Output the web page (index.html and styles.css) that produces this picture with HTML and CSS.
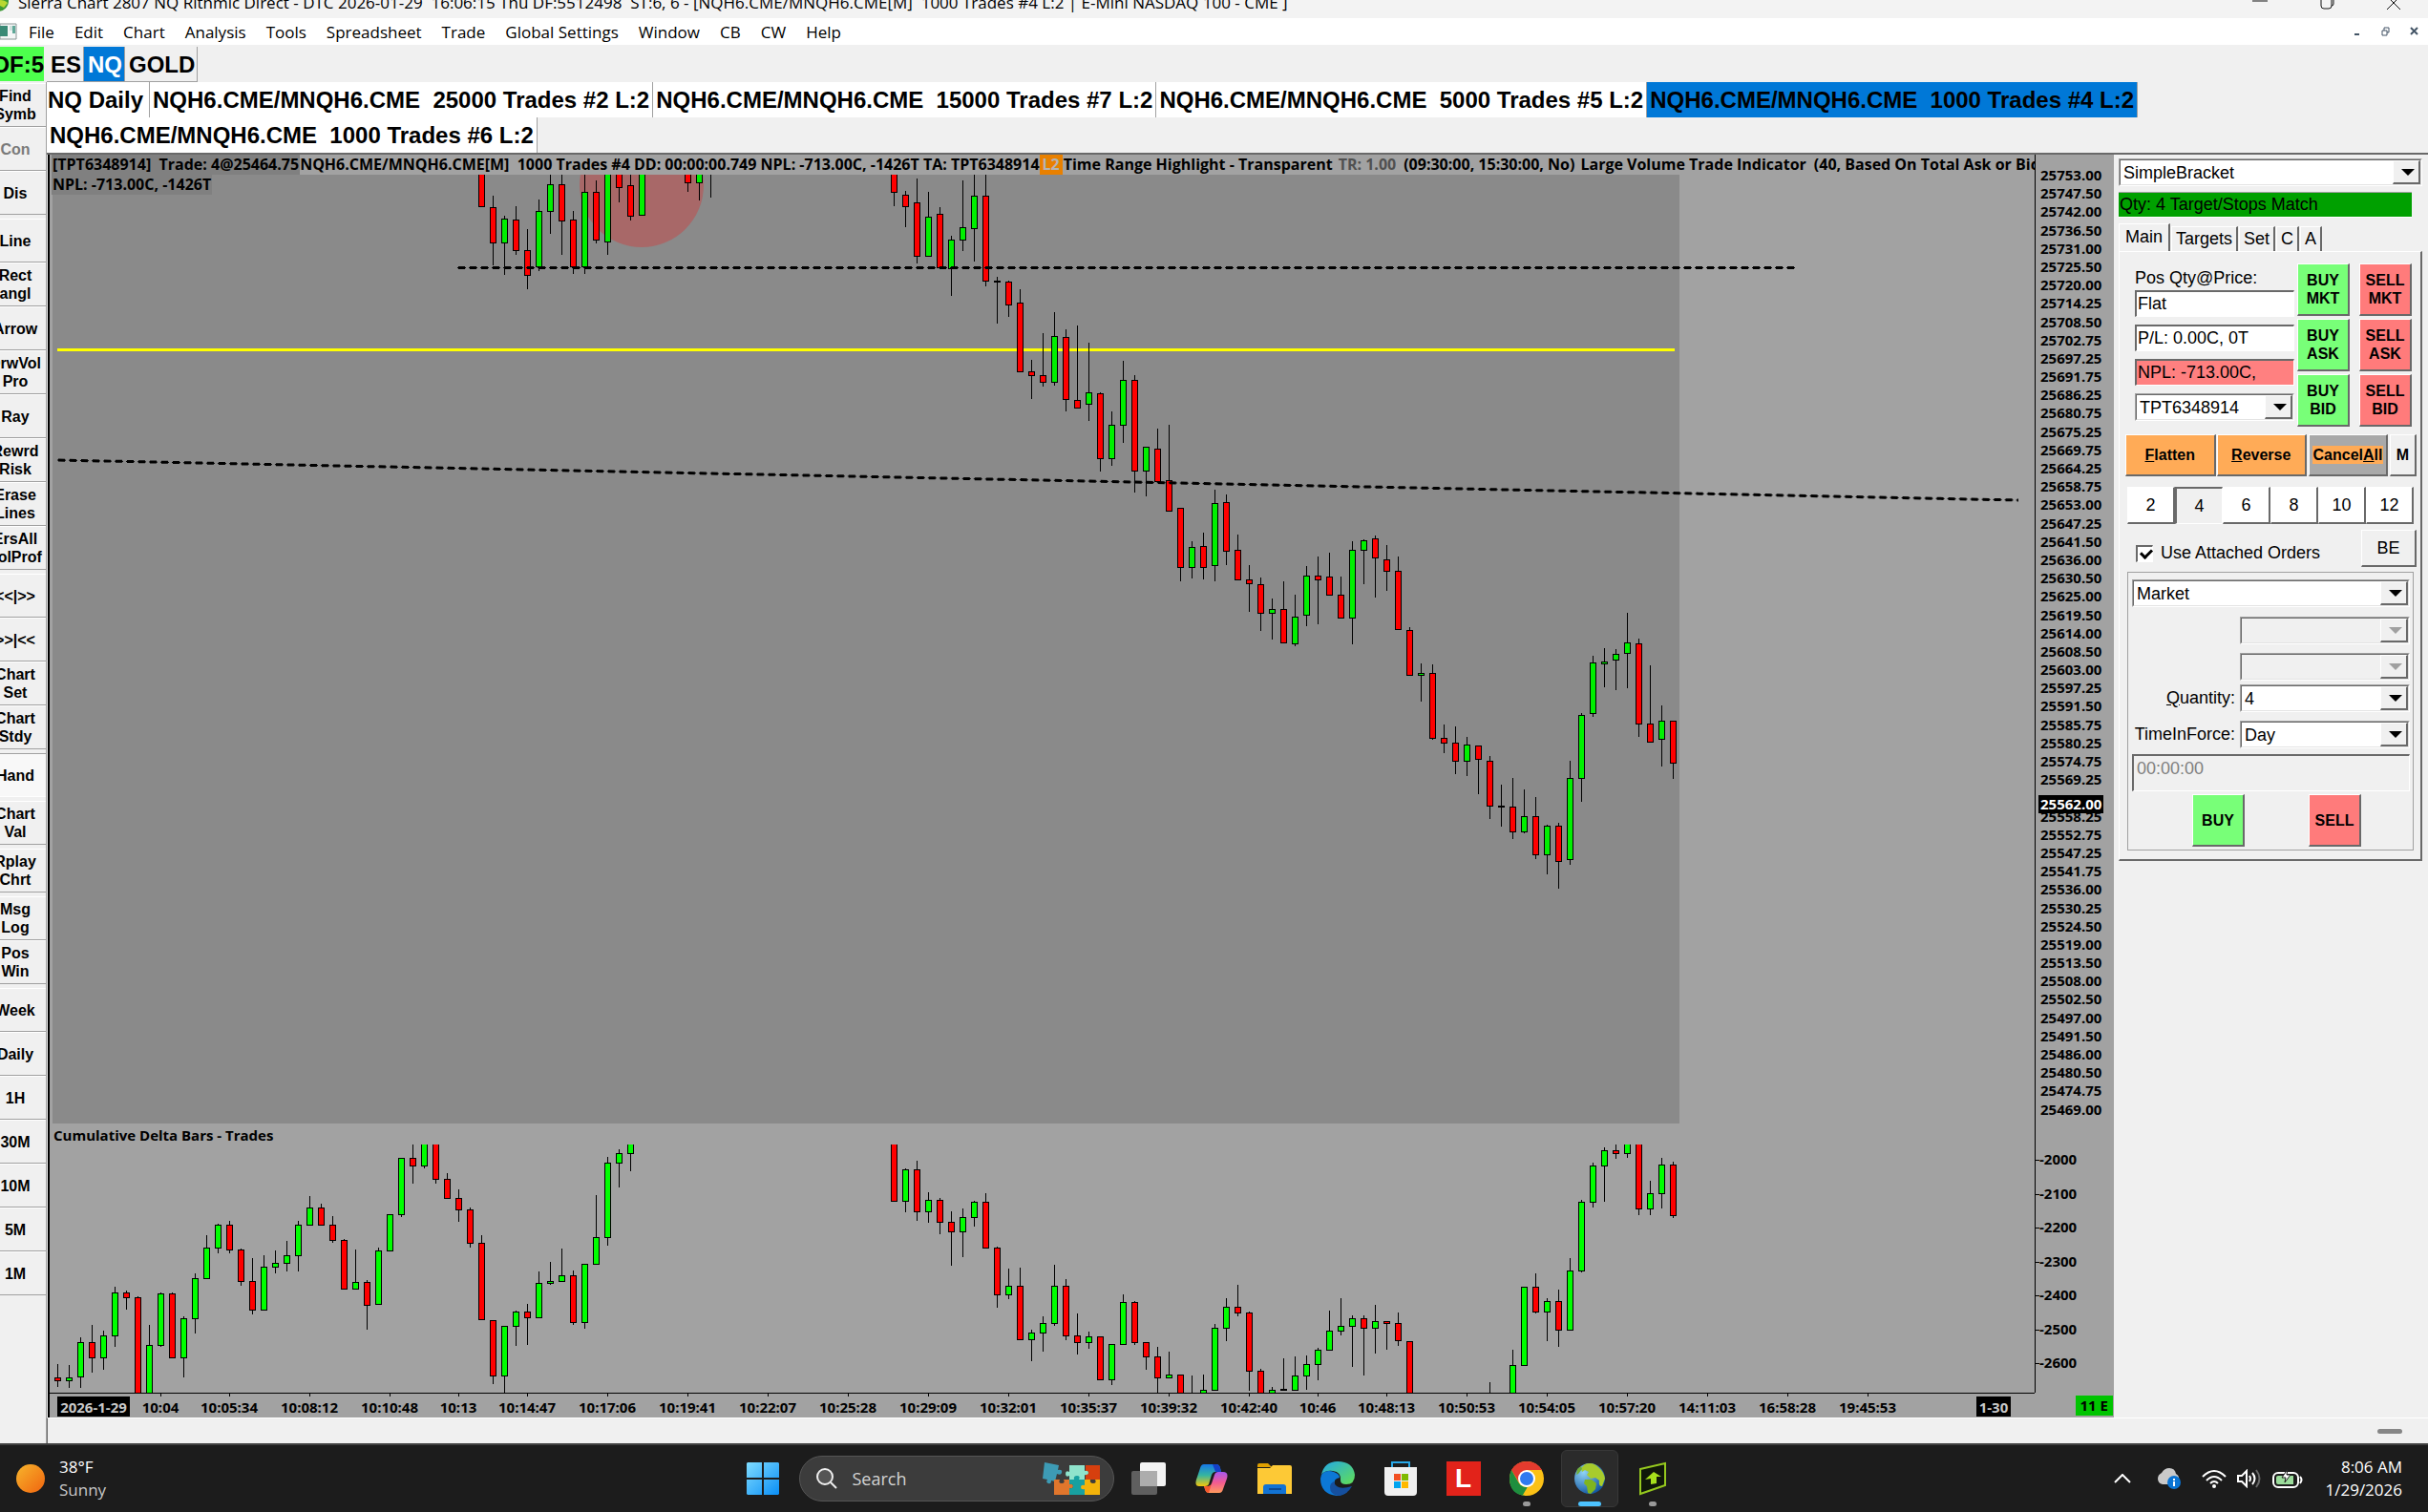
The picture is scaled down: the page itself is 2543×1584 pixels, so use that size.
FILE: index.html
```html
<!DOCTYPE html>
<html lang="en">
<head>
  <meta charset="UTF-8">
  <meta name="viewport" content="width=device-width, initial-scale=1.0">
  <title>Sierra Chart</title>
  <link rel="stylesheet" href="styles.css">
</head>
<body>
  <header class="titlebar">
    <svg class="app-icon" width="10" height="19" viewBox="0 0 10 19">
      <circle cx="-2" cy="1" r="11" fill="#3d9a35"/>
      <path d="M0 0q5 0 8 3l-4 5-4-2z" fill="#b8d832"/>
    </svg>
    <span class="title-text">Sierra Chart 2807 NQ Rithmic Direct - DTC 2026-01-29  16:06:15 Thu DF:5512498  ST:6, 6 - [NQH6.CME/MNQH6.CME[M]  1000 Trades #4 L:2 | E-Mini NASDAQ 100 - CME ]</span>
    <div class="window-buttons">
      <button aria-label="Minimize"><svg width="16" height="12"><path d="M0 1h16" stroke="#111" fill="none"/></svg></button>
      <button aria-label="Restore"><svg width="16" height="12"><path d="M2 0v6q0 3 3 3h5q3 0 3-3V0M13 6q2 0 2-2V0" stroke="#111" fill="none"/></svg></button>
      <button aria-label="Close"><svg width="16" height="12"><path d="M1 10L8 3l7 7M8 3L5 0M8 3l3-3" stroke="#111" fill="none"/></svg></button>
    </div>
  </header>

  <nav class="menubar">
    <svg class="doc-icon" width="18" height="18" viewBox="0 0 18 18">
      <path d="M0 1h17v16H0z" fill="#f4f6f6" stroke="#8b9696"/>
      <path d="M0 3h8v11H0z" fill="#3a8a76"/>
      <path d="M10 3h5v5h-5z" fill="#cfe0dc"/>
      <path d="M13 3h3v8h-3z" fill="#5fa898"/>
    </svg>
    <div class="menu-items">
      <button>File</button><button>Edit</button><button>Chart</button><button>Analysis</button><button>Tools</button><button>Spreadsheet</button><button>Trade</button><button>Global Settings</button><button>Window</button><button>CB</button><button>CW</button><button>Help</button>
    </div>
    <div class="mdi-buttons">
      <button aria-label="Minimize chart"><svg width="10" height="10"><path d="M2 8h5" stroke="#456" stroke-width="2"/></svg></button>
      <button aria-label="Restore chart"><svg width="10" height="10"><path d="M1 4h5v5H1zM3 4V1h5v5H6" stroke="#456" fill="none"/></svg></button>
      <button aria-label="Close chart"><svg width="10" height="10"><path d="M1 1l7 7M8 1L1 8" stroke="#456" stroke-width="2"/></svg></button>
    </div>
  </nav>

  <div class="workbooks">
    <span class="data-feed">DF:5</span>
    <button>ES</button>
    <button class="active">NQ</button>
    <button>GOLD</button>
  </div>

  <div class="workspace">
    <aside class="tools">
      <div class="tool-group">
        <button>Find<br>Symb</button>
        <button disabled>Con</button>
        <button>Dis</button>
      </div>
      <div class="tool-group">
        <button>Line</button>
        <button>Rect<br>angl</button>
        <button>Arrow</button>
        <button>DrwVol<br>Pro</button>
        <button>Ray</button>
        <button>Rewrd<br>Risk</button>
        <button>Erase<br>Lines</button>
        <button>ErsAll<br>VolProf</button>
      </div>
      <div class="tool-group">
        <button>&lt;&lt;|&gt;&gt;</button>
        <button>&gt;&gt;|&lt;&lt;</button>
        <button>Chart<br>Set</button>
        <button>Chart<br>Stdy</button>
      </div>
      <div class="tool-group">
        <button class="pressed">Hand</button>
      </div>
      <div class="tool-group">
        <button>Chart<br>Val</button>
      </div>
      <div class="tool-group">
        <button>Rplay<br>Chrt</button>
      </div>
      <div class="tool-group">
        <button>Msg<br>Log</button>
        <button>Pos<br>Win</button>
      </div>
      <div class="tool-group">
        <button>Week</button>
        <button>Daily</button>
        <button>1H</button>
        <button>30M</button>
        <button>10M</button>
        <button>5M</button>
        <button>1M</button>
      </div>
    </aside>

    <main class="main">
      <div class="chart-tabs">
        <button class="first">NQ Daily</button>
        <button>NQH6.CME/MNQH6.CME  25000 Trades #2 L:2</button>
        <button>NQH6.CME/MNQH6.CME  15000 Trades #7 L:2</button>
        <button>NQH6.CME/MNQH6.CME  5000 Trades #5 L:2</button>
        <button class="active">NQH6.CME/MNQH6.CME  1000 Trades #4 L:2</button>
        <button>NQH6.CME/MNQH6.CME  1000 Trades #6 L:2</button>
      </div>

      <div class="content">
        <section class="chart">
          <div class="plots">
            <div class="chart-header">
              <span class="trade-label">[TPT6348914]  Trade: 4@25464.75</span>
              <span>NQH6.CME/MNQH6.CME[M]  1000 Trades #4 DD: 00:00:00.749 NPL: -713.00C, -1426T TA: TPT6348914</span>
              <span class="level2">L2</span>
              <span>Time Range Highlight - Transparent</span>
              <span class="dim">TR: 1.00</span>
              <span class="params">(09:30:00, 15:30:00, No)</span>
              <span class="study">Large Volume Trade Indicator</span>
              <span class="params">(40, Based On Total Ask or Bid Volume)</span>
            </div>
            <div class="price-plot">
              <span class="npl-label">NPL: -713.00C, -1426T</span>
              <svg id="pricePlot"></svg>
            </div>
            <div class="study-title">Cumulative Delta Bars - Trades</div>
            <svg id="deltaPlot" class="delta-plot"></svg>
            <svg id="timeAxis" class="time-axis"></svg>
          </div>
          <div class="axis">
            <div class="scales">
              <div class="price-scale" id="priceScale">
                <span class="last-price">25562.00</span>
              </div>
              <div class="delta-scale" id="deltaScale"></div>
            </div>
            <div class="axis-foot"><span>11 E</span></div>
          </div>
        </section>

        <section class="trade">
          <div class="combo">
            <select aria-label="Trade configuration"><option>SimpleBracket</option></select>
          </div>
          <div class="status-match">Qty: 4 Target/Stops Match</div>
          <div class="trade-tabs">
            <button class="active">Main</button><button>Targets</button><button>Set</button><button>C</button><button>A</button>
          </div>
          <div class="trade-body">
            <div class="position">
              <div class="position-fields">
                <label for="pos">Pos Qty@Price:</label>
                <input id="pos" type="text" value="Flat" readonly>
                <input type="text" value="P/L: 0.00C, 0T" aria-label="Profit and loss" readonly>
                <input class="loss" type="text" value="NPL: -713.00C," aria-label="Net profit and loss" readonly>
                <div class="combo">
                  <select aria-label="Trade account"><option>TPT6348914</option></select>
                </div>
              </div>
              <div class="quick">
                <button class="buy">BUY<br>MKT</button><button class="sell">SELL<br>MKT</button>
                <button class="buy">BUY<br>ASK</button><button class="sell">SELL<br>ASK</button>
                <button class="buy">BUY<br>BID</button><button class="sell">SELL<br>BID</button>
              </div>
            </div>

            <div class="actions">
              <button class="orange"><u>F</u>latten</button>
              <button class="orange"><u>R</u>everse</button>
              <button class="cancel"><span>Cancel<u>A</u>ll</span></button>
              <button class="mini">M</button>
            </div>

            <div class="quantities">
              <button>2</button><button class="pressed">4</button><button>6</button><button>8</button><button>10</button><button>12</button>
            </div>

            <div class="attached">
              <input type="checkbox" id="attached" checked>
              <label for="attached">Use Attached Orders</label>
              <button>BE</button>
            </div>

            <div class="order">
              <div class="combo">
                <select aria-label="Order type"><option>Market</option></select>
              </div>
              <div class="order-grid">
                <span></span>
                <div class="combo off"><select aria-label="Price 1" disabled><option></option></select></div>
                <span></span>
                <div class="combo off tight"><select aria-label="Price 2" disabled><option></option></select></div>
                <label for="qty"><u>Q</u>uantity:</label>
                <div class="combo"><select id="qty"><option>4</option></select></div>
                <label for="tif">TimeInForce:</label>
                <div class="combo"><select id="tif"><option>Day</option></select></div>
              </div>
              <input class="gtd" type="text" value="00:00:00" aria-label="Expiry time" disabled>
              <div class="submit">
                <button class="buy">BUY</button>
                <button class="sell">SELL</button>
              </div>
            </div>
          </div>
        </section>
      </div>

      <div class="statusbar"><span class="grip"></span></div>
    </main>
  </div>

  <footer class="taskbar">
    <div class="weather">
      <svg width="30" height="30" viewBox="0 0 30 30">
        <defs><linearGradient id="sun" x1="0" y1="0" x2="1" y2="1"><stop offset="0" stop-color="#f7b52c"/><stop offset="1" stop-color="#f0640f"/></linearGradient></defs>
        <circle cx="15" cy="15" r="15" fill="url(#sun)"/>
      </svg>
      <div><div>38°F</div><div class="soft">Sunny</div></div>
    </div>

    <div class="apps">
      <button aria-label="Start">
        <svg width="36" height="36" viewBox="0 0 36 36">
          <defs><linearGradient id="win" x1="0" y1="0" x2="1" y2="1"><stop offset="0" stop-color="#7fdcff"/><stop offset="1" stop-color="#0a8ef5"/></linearGradient></defs>
          <path d="M2 1h15v16H1V2zM19 1h15l1 1v15H19zM1 19h16v16H2l-1-1zM19 19h16v15l-1 1H19z" fill="url(#win)"/>
        </svg>
      </button>
      <div class="search">
        <svg width="22" height="22" viewBox="0 0 22 22"><circle cx="9" cy="9" r="8" stroke="#eee" stroke-width="2" fill="#555"/><path d="M15 15l6 6" stroke="#eee" stroke-width="2"/></svg>
        <input type="text" placeholder="Search" aria-label="Search">
        <svg width="62" height="36" viewBox="0 0 62 36">
          <path d="M2 1l15 3-1 5q5-1 4 3-1 3-5 1l-2 8-4-1q0 4-3 3-3-1-1-4l-5-1z" fill="#3d9bb5"/>
          <path d="M28 4h16v6q4-2 4 2t-4 2v5H28v-4q-4 2-4-2t4-2z" fill="#8fe3cc"/>
          <path d="M45 4h15v15H45v-5q4 0 3-3-1-2-3-1z" fill="#d63f0e"/>
          <path d="M12 19h6q-2 4 2 4t2-4h6v5q4-1 4 2t-4 2v7H12z" fill="#e0762c"/>
          <path d="M28 19h5q-1-4 3-4t2 4h6v16H28v-7q4 1 4-2t-4-2z" fill="#18a0a0"/>
          <path d="M44 19h6q-1 4 3 4t2-4h5v16H44v-6q-4 1-4-2t4-2z" fill="#f3b30a"/>
        </svg>
      </div>
      <button aria-label="Task view">
        <svg width="36" height="36" viewBox="0 0 36 36"><rect x="0" y="10" width="27" height="25" rx="2" fill="#5f5f5f"/><rect x="9" y="1" width="27" height="25" rx="2" fill="#f3f3f3"/><path d="M9 10h18v16H9z" fill="#adadad"/></svg>
      </button>
      <button aria-label="Copilot">
        <svg width="36" height="36" viewBox="0 0 36 36">
          <defs>
            <linearGradient id="cpA" x1="0" y1="0" x2="0" y2="1"><stop offset="0" stop-color="#1678e8"/><stop offset=".5" stop-color="#35b5a0"/><stop offset="1" stop-color="#f5c60a"/></linearGradient>
            <linearGradient id="cpB" x1="0" y1="0" x2="0" y2="1"><stop offset="0" stop-color="#a558ef"/><stop offset=".5" stop-color="#f25a92"/><stop offset="1" stop-color="#ff9a5c"/></linearGradient>
          </defs>
          <path d="M10 3h13q3 0 4 4l1 4h-6q-3 0-4 3l-3 10q-1 2-4 2H5q-5 0-3-7L6 7q1-4 4-4z" fill="url(#cpA)"/>
          <path d="M26 33H15q-3 0-4-4l-1-3h4q3 0 4-3l3-9q1-3 4-3h5q6 0 4 7l-4 11q-1 4-4 4z" fill="url(#cpB)"/>
          <path d="M19 3h4q3 0 4 4l1 4h-6z" fill="#1440c8"/>
          <path d="M15 33q-3 0-4-4l-1-3h4q3 0 4-3z" fill="#f5582c"/>
        </svg>
      </button>
      <button aria-label="File Explorer">
        <svg width="36" height="36" viewBox="0 0 36 36"><path d="M0 4q0-2 2-2h9l4 4H0z" fill="#e0a000"/><path d="M0 7h13l3-3h18q2 0 2 2v28H0z" fill="#fdc936"/><path d="M6 34V27q0-3 3-3h18q3 0 3 3v7z" fill="#1273d4"/><path d="M12 29h13" stroke="#0b4a94" stroke-width="2"/></svg>
      </button>
      <button aria-label="Edge">
        <svg width="36" height="36" viewBox="0 0 36 36">
          <defs><linearGradient id="edge" x1="0" y1="0" x2="1" y2="1"><stop offset="0" stop-color="#23a7e8"/><stop offset="1" stop-color="#62e053"/></linearGradient></defs>
          <path d="M1 14Q4 0 18 0q16 0 18 14 0 10-9 10-6 0-6-4 1-9-8-10Q5 9 1 14z" fill="url(#edge)"/>
          <path d="M1 14q5-6 13-3 6 2 6 6-7 1-5 8 3 9 13 7-5 4-11 4Q0 34 0 18z" fill="#0c78d6"/>
          <path d="M14 21q2 10 19 5-5 9-14 10-9-1-9-9 0-4 4-6z" fill="#154f9e"/>
        </svg>
      </button>
      <button aria-label="Microsoft Store">
        <svg width="36" height="36" viewBox="0 0 36 36"><path d="M9 8V1h18v7" fill="none" stroke="#28a8e8" stroke-width="2"/><path d="M1 6h34v26q0 4-4 4H5q-4 0-4-4z" fill="#f0f0f0"/><path d="M11 13h7v7h-7z" fill="#f25022"/><path d="M19 13h7v7h-7z" fill="#7fba00"/><path d="M11 21h7v7h-7z" fill="#00a4ef"/><path d="M19 21h7v7h-7z" fill="#ffb900"/></svg>
      </button>
      <button aria-label="L"><span class="l-tile">L</span></button>
      <button aria-label="Chrome" class="running">
        <svg width="36" height="36" viewBox="0 0 36 36"><circle cx="18" cy="18" r="18" fill="#fbc116"/><path d="M2 9Q7 0 18 0t16 9H18l-8 13z" fill="#e33b2e"/><path d="M2 9l8 14q3 4 8 4l1 0-3 9Q0 34 0 18 0 13 2 9z" fill="#1e8e3e"/><path d="M26 22l-8 14q-2 0-4-1l6-10z" fill="#fbc116"/><circle cx="18" cy="18" r="9" fill="#fff"/><circle cx="18" cy="18" r="7" fill="#2f7af0"/></svg>
      </button>
      <button aria-label="Sierra Chart" class="running current">
        <svg width="34" height="34" viewBox="0 0 34 34">
          <defs><radialGradient id="sea" cx=".3" cy=".3" r=".8"><stop offset="0" stop-color="#8fd3f5"/><stop offset="1" stop-color="#0c4f9c"/></radialGradient></defs>
          <circle cx="17" cy="17" r="16" fill="url(#sea)"/>
          <path d="M12 2q8-3 14 3 6 5 7 12l-3 8q-4 0-3-6l-4-3-5 1-4-4 2-3-4-2-3 2-1-4z" fill="#a8cc2c"/>
          <path d="M12 18l7 0 5 4-1 6-5 5-3-1-1-7-3-3z" fill="#7fb51f"/>
          <path d="M4 7l4-3 1 3-4 5-2 1z" fill="#6fae3a"/>
        </svg>
      </button>
      <button aria-label="Remote" class="running">
        <svg width="34" height="36" viewBox="0 0 34 36"><path d="M4 8l26-6v23L4 34z" fill="#10180a" stroke="#95c81e" stroke-width="2"/><path d="M9 19l9-8 8 5-5 0 0 7-6 1 0-6z" fill="#a6e01c"/></svg>
      </button>
    </div>

    <div class="tray">
      <svg width="18" height="10" viewBox="0 0 18 10"><path d="M1 9l8-8 8 8" fill="none" stroke="#fff" stroke-width="2"/></svg>
      <svg width="26" height="24" viewBox="0 0 26 24"><path d="M6 18q-5-1-5-6 0-4 4-6 3-5 8-5 6 0 7 6 4 2 3 7l-5 4z" fill="#c9c9c9"/><circle cx="18" cy="16" r="7" fill="#0a74d4"/><path d="M18 12v2M18 15v5" stroke="#fff" stroke-width="2"/></svg>
      <svg width="26" height="20" viewBox="0 0 26 20"><path d="M1 8q12-12 24 0M5 12q8-8 16 0M9 15q4-4 8 0" fill="none" stroke="#fff" stroke-width="2"/><circle cx="13" cy="18" r="2" fill="#fff"/></svg>
      <svg width="26" height="20" viewBox="0 0 26 20"><path d="M1 7h4l5-5v16l-5-5H1z" fill="none" stroke="#fff" stroke-width="2"/><path d="M13 7q2 3 0 6M16 4q5 6 0 12" fill="none" stroke="#fff" stroke-width="2"/><path d="M20 1q7 9 0 18" fill="none" stroke="#666" stroke-width="2"/></svg>
      <svg width="32" height="22" viewBox="0 0 32 22"><rect x="1" y="5" width="26" height="15" rx="5" fill="none" stroke="#fff" stroke-width="2"/><path d="M4 10q0-2 2-2h16v9H6q-2 0-2-2z" fill="#9bdc9b"/><path d="M29 9q3 3 0 7" fill="none" stroke="#fff" stroke-width="2"/><path d="M16 1l-6 9h4l-1 5 6-8h-4z" fill="#fff" stroke="#1c1c1c"/></svg>
      <div class="clock"><div>8:06 AM</div><div>1/29/2026</div></div>
    </div>
  </footer>

  <script src="app.js"></script>
</body>
</html>
```
FILE: styles.css
```css
* {
  box-sizing: border-box;
}
body {
  margin: 0;
  height: 100vh;
  display: flex;
  flex-direction: column;
  overflow: hidden;
  background: #f0f0f0;
  color: #000;
  font-family: "Liberation Sans", Arial, sans-serif;
  font-size: 18px;
}
button, input, select {
  font: inherit;
  color: inherit;
  margin: 0;
  border-radius: 0;
}
button {
  border: 0;
  padding: 0;
  background: none;
  white-space: pre;
}
svg {
  display: block;
  flex: none;
}

/* title and menu */
.titlebar {
  display: flex;
  height: 19px;
  flex: none;
  overflow: hidden;
  background: #f3f3f3;
  font: 17px/20px "Open Sans", "Noto Sans", sans-serif;
}
.app-icon {
  margin-right: 9px;
}
.title-text {
  flex: 1;
  white-space: pre;
  margin-top: -7px;
}
.window-buttons {
  display: flex;
  gap: 54px;
  padding-right: 28px;
  align-items: flex-start;
}
.menubar {
  display: flex;
  align-items: center;
  height: 28px;
  flex: none;
  background: #fff;
  font: 17px/28px "Open Sans", "Noto Sans", sans-serif;
}
.menu-items {
  display: flex;
  flex: 1;
  gap: 21px;
  margin-left: 12px;
  padding-top: 2px;
}
.mdi-buttons {
  display: flex;
  gap: 20px;
  padding-right: 9px;
}

/* workbook row */
.workbooks {
  display: flex;
  align-items: flex-start;
  height: 39px;
  flex: none;
  padding-top: 2px;
  font-size: 24px;
  font-weight: bold;
}
.data-feed {
  width: 46px;
  height: 36px;
  margin-right: 3px;
  line-height: 38px;
  background: #4dff4d;
  overflow: hidden;
  direction: rtl;
}
.workbooks button {
  height: 37px;
  padding: 2px 2px 0 4px;
  border-right: 1px solid #a0a0a0;
  border-bottom: 1px solid #a0a0a0;
}
.workbooks .active {
  background: #0078d7;
  color: #fff;
}

/* left tool buttons */
.workspace {
  display: flex;
  flex: 1;
  min-height: 0;
}
.tools {
  width: 49px;
  flex: none;
  padding-top: 1px;
  display: flex;
  flex-direction: column;
  gap: 4px;
  overflow: hidden;
  border-right: 1px solid #a0a0a0;
}
.tool-group {
  display: flex;
  flex-direction: column;
  width: 64px;
  margin-left: -16px;
}
.tools button {
  height: 46px;
  font-size: 16px;
  font-weight: bold;
  line-height: 19px;
  display: flex;
  align-items: center;
  justify-content: center;
  text-align: center;
  border-top: 1px solid #fff;
  border-bottom: 1px solid #a0a0a0;
}
.tools button:disabled {
  color: #7a7a7a;
}
.tools .pressed {
  background: #f8f8f8;
  border-top-color: #a0a0a0;
  border-bottom-color: #fff;
}

.main {
  flex: 1;
  min-width: 0;
  display: flex;
  flex-direction: column;
}
.chart-tabs {
  display: flex;
  flex-wrap: wrap;
  font-size: 24px;
  font-weight: bold;
}
.chart-tabs button {
  height: 37px;
  padding: 0 3px;
  background: #fff;
  border-right: 1px solid #a0a0a0;
}
.chart-tabs .first {
  padding: 0 6px 0 1px;
}
.chart-tabs .active {
  background: #0078d7;
}
.content {
  display: flex;
  flex: 1;
  min-height: 0;
  border-top: 2px solid #696969;
}

/* chart */
.chart {
  flex: 1;
  min-width: 0;
  display: flex;
  margin-left: 1px;
  background: #a2a2a2;
  border-left: 2px solid #000;
  font: bold 15px/19px "Open Sans", "Noto Sans", sans-serif;
}
.plots {
  flex: 1;
  min-width: 0;
  display: flex;
  flex-direction: column;
}
.chart-header {
  display: flex;
  height: 21px;
  margin-left: 2px;
  font-size: 16px;
  line-height: 21px;
  white-space: pre;
  overflow: hidden;
}
.chart-header span {
  flex: none;
}
.chart-header .trade-label {
  background: #808080;
  padding: 0 1px;
}
.chart-header .level2 {
  background: #e88000;
  color: #b4b4b4;
  padding: 0 3px;
  margin-right: 1px;
}
.chart-header .dim {
  color: #505050;
  margin: 0 8px 0 6px;
}
.chart-header .study {
  margin: 0 8px 0 6px;
}
.price-plot {
  flex: 1;
  min-height: 0;
  position: relative;
}
.price-plot svg {
  width: 100%;
  height: 100%;
}
.npl-label {
  position: absolute;
  left: 2px;
  top: 0;
  background: #808080;
  font-size: 16px;
  line-height: 21px;
  padding: 0 1px;
}
.study-title {
  height: 22px;
  line-height: 24px;
  padding-left: 4px;
}
.delta-plot {
  width: 100%;
  height: 260px;
}
.time-axis {
  width: 100%;
  height: 26px;
}
.time-axis text {
  text-anchor: middle;
}

.axis {
  width: 83px;
  flex: none;
  display: flex;
  flex-direction: column;
}
.scales {
  flex: 1;
  min-height: 0;
  display: flex;
  flex-direction: column;
  border-left: 1px solid #000;
  padding-top: 12px;
  padding-bottom: 22px;
}
.price-scale {
  flex: 1;
  position: relative;
  display: flex;
  flex-direction: column;
  justify-content: space-between;
  margin-bottom: 33px;
}
.price-scale span {
  height: 19px;
  padding-left: 5px;
}
.price-scale .last-price {
  position: absolute;
  left: 3px;
  top: 66%;
  padding: 0 2px;
  background: #000;
  color: #fff;
}
.delta-scale {
  height: 232px;
  display: flex;
  flex-direction: column;
  justify-content: space-between;
}
.delta-scale span {
  padding-left: 5px;
}
.delta-scale span::before {
  content: "";
  display: inline-block;
  width: 4px;
  height: 1px;
  margin-left: -5px;
  vertical-align: middle;
  background: #000;
}
.axis-foot {
  height: 26px;
  padding: 3px 1px 2px;
  display: flex;
  justify-content: flex-end;
}
.axis-foot span {
  background: #00c400;
  line-height: 21px;
  padding: 0 5px;
}

/* trade window */
.trade {
  width: 329px;
  flex: none;
  padding: 4px 6px 0 5px;
}
.combo {
  position: relative;
  height: 29px;
  border: 1px solid #a0a0a0;
  border-right-color: #fff;
  border-bottom-color: #fff;
}
.combo select {
  width: 100%;
  height: 100%;
  appearance: none;
  border: 1px solid #696969;
  border-right-color: #e3e3e3;
  border-bottom-color: #e3e3e3;
  background: #fff;
  padding: 0 28px 0 3px;
  opacity: 1;
}
.combo::before {
  content: "";
  position: absolute;
  right: 1px;
  top: 1px;
  bottom: 1px;
  width: 26px;
  background: #f0f0f0;
  border: 1px solid #fff;
  border-right: 2px solid #696969;
  border-bottom: 2px solid #696969;
  pointer-events: none;
}
.combo::after {
  content: "";
  position: absolute;
  right: 7px;
  top: 10px;
  border: 7px solid transparent;
  border-top-color: #000;
  border-bottom: 0;
  pointer-events: none;
}
.combo.off select {
  background: #f0f0f0;
}
.combo.off::after {
  border-top-color: #a0a0a0;
}
.status-match {
  height: 27px;
  margin: 6px 11px 7px 0;
  padding-left: 1px;
  line-height: 25px;
  background: #00a000;
  border-top: 1px solid #a0a0a0;
  border-bottom: 1px solid #fff;
}
.trade-tabs {
  display: flex;
  align-items: flex-end;
  gap: 1px;
  height: 28px;
}
.trade-tabs button {
  height: 26px;
  padding: 0 4px;
  border: 1px solid #fff;
  border-right: 2px solid #696969;
  border-bottom: 0;
}
.trade-tabs .active {
  height: 29px;
  padding: 0 6px 2px;
}
.trade-body {
  padding: 12px 4px 9px 6px;
  border: 1px solid #fff;
  border-right: 2px solid #696969;
  border-bottom: 2px solid #696969;
}
.position {
  display: flex;
  gap: 3px;
  padding-left: 10px;
}
.position-fields {
  width: 167px;
  display: flex;
  flex-direction: column;
  gap: 8px;
}
.position-fields label {
  line-height: 20px;
  padding-top: 5px;
  margin-bottom: -5px;
}
input[type="text"] {
  width: 100%;
  height: 28px;
  padding: 0 1px;
  background: #fff;
  border: 2px solid #696969;
  border-right: 1px solid #fff;
  border-bottom: 1px solid #fff;
}
input.loss {
  background: #ff8080;
}
.quick {
  display: grid;
  grid-template-columns: 55px 55px;
  gap: 3px 10px;
}
.quick button, .submit button {
  height: 55px;
  font-size: 16px;
  font-weight: bold;
  line-height: 19px;
}
.trade-body button {
  background: #f0f0f0;
  border: 1px solid #fff;
  border-right: 2px solid #696969;
  border-bottom: 2px solid #696969;
}
.trade-body .buy {
  background: #78ff78;
}
.trade-body .sell {
  background: #ff7b7b;
}
.actions {
  display: flex;
  gap: 1px;
  margin-top: 8px;
  height: 44px;
  font-size: 16px;
  font-weight: bold;
}
.trade-body .orange {
  flex: 1;
  background: #ffab57;
}
.trade-body .cancel {
  background: #a9a9a9;
  width: 83px;
  margin: 0 1px;
}
.cancel span {
  background: #ffab57;
  padding: 1px;
}
.actions .mini {
  width: 28px;
}
.quantities {
  display: flex;
  margin: 11px 3px 6px 2px;
}
.quantities button {
  flex: 1;
  height: 39px;
  background: #fff;
}
.quantities .pressed {
  background: #f0f0f0;
  border: 2px solid #696969;
  border-right: 1px solid #fff;
  border-bottom: 1px solid #fff;
}
.attached {
  display: flex;
  align-items: center;
  padding-left: 11px;
}
.attached input {
  appearance: none;
  width: 18px;
  height: 18px;
  margin-top: 10px;
  background: #fff;
  border: 2px solid #696969;
  border-right: 1px solid #fff;
  border-bottom: 1px solid #fff;
}
.attached input:checked::before {
  content: "";
  display: block;
  width: 9px;
  height: 5px;
  margin: 2px 0 0 3px;
  border-left: 3px solid #000;
  border-bottom: 3px solid #000;
  transform: rotate(-45deg);
}
.attached label {
  flex: 1;
  margin: 10px 0 0 8px;
}
.attached button {
  width: 58px;
  height: 39px;
}
.order {
  margin: 5px 3px 0 2px;
  padding: 7px 3px 3px 4px;
  border: 1px solid #a0a0a0;
}
.order-grid {
  display: grid;
  grid-template-columns: 1fr 178px;
  column-gap: 5px;
  row-gap: 9px;
  margin-top: 10px;
  align-items: center;
  text-align: right;
}
.order-grid .tight {
  margin-bottom: -5px;
}
.order input.gtd {
  height: 39px;
  margin: 6px 0 3px;
  padding: 0 3px 9px;
  background: #f0f0f0;
  color: #808080;
}
.submit {
  display: flex;
  justify-content: center;
  gap: 67px;
  padding-left: 12px;
}
.submit button {
  width: 55px;
}

.statusbar {
  height: 27px;
  flex: none;
  border-top: 1px solid #fff;
  border-left: 1px solid #696969;
  display: flex;
  align-items: center;
  justify-content: flex-end;
  padding-right: 27px;
}
.grip {
  width: 26px;
  height: 5px;
  border-radius: 3px;
  background: #868686;
}

/* taskbar */
.taskbar {
  display: grid;
  grid-template-columns: 1fr auto 1fr;
  align-items: center;
  height: 72px;
  flex: none;
  background: #1c1c1c;
  border-top: 2px solid #404040;
  color: #fff;
  font: 17px/24px "Open Sans", "Noto Sans", sans-serif;
}
.weather {
  display: flex;
  align-items: center;
  gap: 15px;
  padding-left: 17px;
}
.soft {
  color: #c8c8c8;
}
.apps {
  display: flex;
  gap: 6px;
  align-items: center;
  margin-right: 14px;
}
.apps button {
  width: 60px;
  height: 60px;
  display: flex;
  align-items: center;
  justify-content: center;
  position: relative;
}
.search {
  display: flex;
  align-items: center;
  gap: 16px;
  width: 330px;
  height: 48px;
  margin: 0 0 0 2px;
  padding: 0 12px 0 17px;
  border-radius: 24px;
  background: #3c3c3c;
  border: 1px solid #555;
}
.search input[type="text"] {
  flex: 1;
  min-width: 0;
  padding: 0;
  background: none;
  border: 0;
  font-size: 18px;
}
.search input::placeholder {
  color: #d2d2d2;
  opacity: 1;
}
.l-tile {
  width: 36px;
  height: 36px;
  background: #e2231a;
  font: bold 28px/36px "Liberation Sans", sans-serif;
}
.running::after {
  content: "";
  position: absolute;
  left: 26px;
  bottom: 1px;
  width: 8px;
  height: 5px;
  border-radius: 3px;
  background: #9a9a9a;
}
.apps .current {
  background: #2b2b2b;
  border: 1px solid #383838;
  border-radius: 6px;
}
.apps .current::after {
  left: 17px;
  bottom: 0;
  width: 24px;
  background: #4cc2ff;
}
.tray {
  display: flex;
  align-items: center;
  justify-content: flex-end;
  gap: 11px;
  padding-right: 27px;
}
.tray svg:first-child {
  margin-right: 16px;
}
.tray svg:nth-child(2) {
  margin-right: 10px;
}
.clock {
  text-align: right;
  margin-left: 12px;
}
```
FILE: app.js
```js
const SVG = 'http://www.w3.org/2000/svg';
const STEP = 12;
const LEFT = 8;

// each bar: [column, colour, high, body top, body bottom, low]
// g = up, r = down, k = open equals close
const priceBars = [
  [37,'r',170,170,217,217],[38,'r',205,217,255,278],[39,'g',226,229,255,288],[40,'r',216,230,263,267],
  [41,'r',240,262,289,303],[42,'g',209,221,280,284],[43,'g',170,193,222,245],[44,'r',170,193,232,267],
  [45,'r',221,230,280,287],[46,'g',170,201,280,287],[47,'r',189,201,252,255],[48,'g',170,170,254,267],
  [49,'r',170,170,197,212],[50,'r',170,194,227,231],[51,'g',170,170,226,226],[55,'r',170,170,192,201],
  [56,'g',170,170,192,210],[57,'k',170,170,170,207],
  [73,'r',170,170,202,216],[74,'r',200,204,217,238],[75,'r',187,212,269,276],[76,'g',201,227,269,269],
  [77,'r',217,224,281,281],[78,'g',247,251,282,310],[79,'g',189,238,252,263],[80,'g',170,205,240,274],
  [81,'r',170,205,295,300],[82,'k',290,295,295,339],[83,'r',294,295,320,332],[84,'r',303,317,390,390],
  [85,'r',377,389,394,418],[86,'r',349,393,401,405],[87,'g',327,352,401,404],[88,'r',345,353,419,431],
  [89,'r',341,419,428,428],[90,'g',359,411,424,441],[91,'r',411,412,481,494],[92,'g',431,445,481,488],
  [93,'g',378,398,446,464],[94,'r',393,398,494,516],[95,'g',468,468,494,520],[96,'r',449,470,505,505],
  [97,'r',445,503,536,536],[98,'r',532,532,595,609],[99,'g',567,573,595,606],[100,'r',558,572,595,607],
  [101,'g',513,527,593,609],[102,'r',518,526,578,592],[103,'r',560,576,608,608],[104,'r',592,607,612,641],
  [105,'r',605,612,643,661],[106,'g',627,638,643,670],[107,'r',609,638,674,674],[108,'g',623,646,675,677],
  [109,'g',593,603,645,656],[110,'r',583,603,608,654],[111,'r',579,604,624,624],[112,'r',604,623,648,648],
  [113,'g',567,576,648,675],[114,'g',565,566,577,612],[115,'r',561,564,585,626],[116,'r',571,586,599,619],
  [117,'r',583,598,660,660],[118,'r',657,660,708,708],[119,'g',695,705,708,735],[120,'r',696,705,774,775],
  [121,'r',759,773,779,789],[122,'r',761,778,798,811],[123,'g',772,780,798,813],[124,'r',781,781,796,832],
  [125,'r',792,797,845,858],[126,'k',822,845,845,866],[127,'r',815,845,872,879],[128,'g',827,855,872,873],
  [129,'r',835,855,896,900],[130,'g',864,865,896,916],[131,'r',862,865,903,931],[132,'g',797,815,901,906],
  [133,'g',747,749,816,840],[134,'g',687,694,748,751],[135,'g',679,693,696,720],[136,'g',680,685,692,723],
  [137,'g',642,673,685,721],[138,'r',669,674,759,772],[139,'r',697,758,778,778],[140,'g',739,755,775,803],
  [141,'r',755,755,800,816]
];

const deltaBars = [
  [0,'r',1429,1443,1447,1453],[1,'g',1430,1443,1447,1454],[2,'g',1401,1406,1443,1454],[3,'r',1388,1406,1423,1438],
  [4,'g',1394,1399,1423,1435],[5,'g',1348,1354,1400,1411],[6,'r',1352,1354,1360,1372],[7,'r',1358,1359,1470,1470],
  [8,'g',1388,1409,1470,1470],[9,'g',1354,1355,1410,1411],[10,'r',1354,1355,1423,1423],[11,'g',1379,1381,1423,1443],
  [12,'g',1334,1339,1382,1397],[13,'g',1294,1307,1340,1340],[14,'g',1282,1283,1308,1313],[15,'r',1279,1283,1310,1313],
  [16,'r',1308,1309,1343,1347],[17,'r',1318,1342,1373,1377],[18,'g',1315,1327,1373,1373],[19,'g',1310,1323,1328,1334],
  [20,'g',1300,1315,1324,1332],[21,'g',1279,1283,1316,1332],[22,'g',1253,1265,1284,1284],[23,'r',1261,1265,1284,1284],
  [24,'r',1274,1283,1300,1302],[25,'r',1298,1299,1351,1351],[26,'g',1309,1343,1351,1351],[27,'r',1341,1343,1368,1393],
  [28,'g',1307,1310,1367,1367],[29,'g',1272,1272,1311,1311],[30,'g',1213,1213,1273,1275],[31,'r',1190,1213,1222,1240],
  [32,'g',1190,1190,1222,1224],[33,'r',1190,1190,1236,1240],[34,'r',1229,1235,1256,1256],[35,'r',1246,1255,1268,1280],
  [36,'r',1265,1267,1303,1307],[37,'r',1294,1302,1383,1383],[38,'r',1383,1383,1442,1450],[39,'g',1389,1389,1442,1460],
  [40,'g',1373,1374,1390,1410],[41,'r',1366,1374,1381,1409],[42,'g',1332,1344,1381,1381],[43,'g',1322,1342,1345,1346],
  [44,'g',1308,1336,1343,1343],[45,'r',1331,1336,1386,1388],[46,'g',1324,1324,1386,1392],[47,'g',1252,1296,1325,1325],
  [48,'g',1212,1218,1297,1305],[49,'g',1204,1208,1219,1244],[50,'g',1190,1190,1209,1227],
  [73,'r',1190,1190,1259,1259],[74,'g',1224,1225,1259,1270],[75,'r',1216,1225,1270,1279],[76,'g',1249,1257,1270,1281],
  [77,'r',1255,1257,1281,1293],[78,'r',1269,1280,1291,1326],[79,'g',1266,1275,1291,1317],[80,'g',1258,1259,1276,1285],
  [81,'r',1250,1259,1308,1308],[82,'r',1306,1307,1357,1370],[83,'g',1329,1347,1357,1361],[84,'r',1328,1347,1404,1404],
  [85,'g',1393,1396,1404,1426],[86,'g',1379,1386,1397,1416],[87,'g',1325,1347,1387,1389],[88,'r',1340,1347,1400,1404],
  [89,'r',1376,1399,1407,1419],[90,'g',1395,1400,1407,1413],[91,'r',1400,1400,1446,1446],[92,'g',1408,1408,1446,1451],
  [93,'g',1356,1364,1409,1409],[94,'r',1363,1364,1407,1409],[95,'r',1406,1406,1422,1435],[96,'r',1411,1421,1444,1460],
  [97,'g',1416,1440,1444,1444],[98,'r',1440,1440,1470,1470],[99,'k',1441,1470,1470,1470],[100,'g',1440,1456,1470,1470],
  [101,'g',1387,1391,1457,1457],[102,'g',1360,1369,1392,1405],[103,'r',1346,1369,1376,1379],[104,'r',1374,1375,1437,1457],
  [105,'r',1434,1436,1470,1470],[106,'g',1453,1456,1470,1470],[107,'k',1423,1456,1456,1456],[108,'g',1421,1441,1457,1457],
  [109,'g',1420,1429,1442,1456],[110,'g',1412,1414,1430,1446],[111,'g',1373,1394,1415,1415],[112,'g',1360,1389,1395,1399],
  [113,'g',1378,1381,1390,1432],[114,'r',1378,1381,1392,1441],[115,'g',1367,1384,1392,1418],[116,'r',1384,1384,1387,1414],
  [117,'r',1375,1386,1405,1410],[118,'r',1405,1405,1470,1470],[125,'k',1448,1470,1470,1470],[127,'g',1414,1430,1470,1470],
  [128,'g',1348,1348,1431,1431],[129,'r',1334,1348,1375,1376],[130,'g',1360,1363,1375,1405],[131,'r',1351,1363,1394,1411],
  [132,'g',1318,1331,1394,1394],[133,'g',1257,1259,1332,1333],[134,'g',1218,1221,1260,1265],[135,'g',1202,1205,1222,1259],
  [136,'r',1190,1205,1209,1214],[137,'g',1190,1190,1209,1213],[138,'r',1190,1190,1267,1273],[139,'g',1237,1250,1267,1273],
  [140,'g',1213,1220,1251,1266],[141,'r',1217,1220,1274,1276]
];

const times = [
  [9,'10:04'],[15,'10:05:34'],[22,'10:08:12'],[29,'10:10:48'],[35,'10:13'],[41,'10:14:47'],[48,'10:17:06'],
  [55,'10:19:41'],[62,'10:22:07'],[69,'10:25:28'],[76,'10:29:09'],[83,'10:32:01'],[90,'10:35:37'],[97,'10:39:32'],
  [104,'10:42:40'],[110,'10:46'],[116,'10:48:13'],[123,'10:50:53'],[130,'10:54:05'],[137,'10:57:20'],
  [144,'14:11:03'],[151,'16:58:28'],[158,'19:45:53']
];

// the empty slot sits behind the last price marker
const prices = ['25753.00','25747.50','25742.00','25736.50','25731.00','25725.50','25720.00','25714.25','25708.50',
  '25702.75','25697.25','25691.75','25686.25','25680.75','25675.25','25669.75','25664.25','25658.75','25653.00',
  '25647.25','25641.50','25636.00','25630.50','25625.00','25619.50','25614.00','25608.50','25603.00','25597.25',
  '25591.50','25585.75','25580.25','25574.75','25569.25','','25558.25','25552.75','25547.25','25541.75',
  '25536.00','25530.25','25524.50','25519.00','25513.50','25508.00','25502.50','25497.00','25491.50','25486.00',
  '25480.50','25474.75','25469.00'];

function add(parent, tag, attrs) {
  const el = document.createElementNS(SVG, tag);
  for (const key in attrs) el.setAttribute(key, attrs[key]);
  parent.appendChild(el);
  return el;
}

function line(parent, x1, y1, x2, y2, width, color, dash) {
  const attrs = { x1, y1, x2, y2, stroke: color, 'stroke-width': width };
  if (dash) attrs['stroke-dasharray'] = dash;
  add(parent, 'line', attrs);
}

// thick dashes with a thin pixel at both ends
function dashedLine(parent, x1, y1, x2, y2) {
  line(parent, x1, y1, x2, y2, 1, '#000', '9 3');
  line(parent, x1 + 1, y1, x2, y2, 3, '#000', '7 5');
}

function drawBars(parent, bars, top, green) {
  bars.forEach(([col, kind, high, bodyTop, bodyBottom, low]) => {
    const x = LEFT + col * STEP;
    add(parent, 'rect', { x, y: high - top, width: 1, height: low - high, fill: '#000' });
    if (kind === 'k') {
      add(parent, 'rect', { x: x - 3, y: bodyTop - top - 1, width: 7, height: 2, fill: '#000' });
      return;
    }
    add(parent, 'rect', { x: x - 3, y: bodyTop - top, width: 7, height: bodyBottom - bodyTop, fill: '#000' });
    add(parent, 'rect', { x: x - 2, y: bodyTop - top + 1, width: 5, height: Math.max(bodyBottom - bodyTop - 2, 1), fill: kind === 'g' ? green : '#f00' });
  });
}

// price plot
const pricePlot = document.getElementById('pricePlot');
add(pricePlot, 'rect', { x: 3, y: 0, width: 1704, height: '100%', fill: '#8a8a8a' });
add(pricePlot, 'circle', { cx: 620, cy: 11, r: 65, fill: '#a86868' });
add(pricePlot, 'rect', { x: LEFT, y: 182, width: 1694, height: 3, fill: '#ff0' });
drawBars(pricePlot, priceBars, 183, '#00f000');
dashedLine(pricePlot, 427, 97.5, 1828, 97.5);
dashedLine(pricePlot, LEFT, 299, 2062, 341);

// cumulative delta
const deltaPlot = document.getElementById('deltaPlot');
drawBars(deltaPlot, deltaBars, 1199, '#00ff00');

// time axis
const timeAxis = document.getElementById('timeAxis');
add(timeAxis, 'rect', { x: 0, y: 0, width: '100%', height: 1, fill: '#000' });
add(timeAxis, 'rect', { x: LEFT, y: 4, width: 76, height: 21, fill: '#000' });
add(timeAxis, 'rect', { x: 2018, y: 4, width: 36, height: 21, fill: '#000' });
add(timeAxis, 'text', { x: 46, y: 21, fill: '#c8c8c8' }).textContent = '2026-1-29';
add(timeAxis, 'text', { x: 2036, y: 21, fill: '#c8c8c8' }).textContent = '1-30';
times.forEach(([col, label]) => {
  const x = LEFT + col * STEP;
  add(timeAxis, 'rect', { x, y: 0, width: 1, height: 4, fill: '#000' });
  add(timeAxis, 'text', { x, y: 21 }).textContent = label;
});

// right scales
const priceScale = document.getElementById('priceScale');
prices.forEach(price => {
  const span = document.createElement('span');
  span.textContent = price;
  priceScale.insertBefore(span, priceScale.lastElementChild);
});
const deltaScale = document.getElementById('deltaScale');
for (let v = 2000; v <= 2600; v += 100) {
  const span = document.createElement('span');
  span.textContent = '-' + v;
  deltaScale.appendChild(span);
}
```
